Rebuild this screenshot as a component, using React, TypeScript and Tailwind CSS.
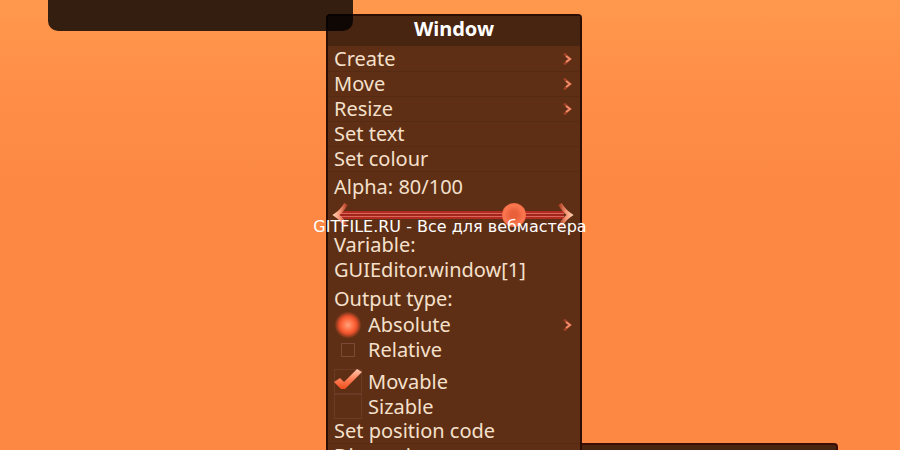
import React from 'react'

const toolItems = [
  { label: 'Create', submenu: true },
  { label: 'Move', submenu: true },
  { label: 'Resize', submenu: true },
  { label: 'Set text', submenu: false },
  { label: 'Set colour', submenu: false },
]

const SubmenuArrow = () => (
  <svg className="w-[9px] h-3" viewBox="0 0 9 12" fill="none" aria-hidden="true">
    <path d="M1 0.5L7 6L1 11.5" stroke="#9c4226" strokeWidth="2.6" />
    <path d="M3 3L7 6L3 9" stroke="#f08a68" strokeWidth="2" />
  </svg>
)

const SliderArrow = ({ className }: { className: string }) => (
  <svg className={className} viewBox="0 0 16 24" fill="none" aria-hidden="true">
    <path d="M14 1Q10 8 4 12Q10 16 14 23" stroke="url(#arrowFade)" strokeWidth="4" />
    <defs>
      <linearGradient id="arrowFade" x1="1" y1="0" x2="15" y2="0" gradientUnits="userSpaceOnUse">
        <stop stopColor="#ffd0b4" />
        <stop offset="0.5" stopColor="#f89474" />
        <stop offset="1" stopColor="#a83a1e" />
      </linearGradient>
    </defs>
  </svg>
)

const MenuItem = ({ label, submenu = false }: { label: string; submenu?: boolean }) => (
  <button
    type="button"
    className="flex h-[25px] w-full items-center justify-between border-b border-[#552b13] pl-1.5 pr-2 text-left"
  >
    {label}
    {submenu && <SubmenuArrow />}
  </button>
)

const App = () => {
  return (
    <main className="relative h-screen overflow-hidden bg-linear-to-b from-[#ff984c] from-0% via-[#ff8e48] via-20% to-[#fc8844] to-40% font-['Noto_Sans','Open_Sans',sans-serif] text-xl leading-6 text-[#f5e0cc]">
      {/* Context menu */}
      <section
        aria-label="Window menu"
        className="absolute left-[326px] top-3.5 w-64 rounded-t-sm border-2 border-[#2c0d03] bg-[#5e2f15]"
      >
        <h1 className="flex h-[30px] items-center justify-center bg-[#482511] pb-1 font-bold text-white">
          Window
        </h1>

        <div className="pt-px">
          {toolItems.map((item) => (
            <MenuItem key={item.label} label={item.label} submenu={item.submenu} />
          ))}
        </div>

        <div className="mt-0.5">
          <label htmlFor="alpha" className="flex h-[25px] items-center px-1.5">
            Alpha: 80/100
          </label>
          <div className="relative flex h-8 items-center pl-1.5 pr-3">
            <input
              id="alpha"
              type="range"
              min="0"
              max="100"
              defaultValue="80"
              className="h-6 w-full appearance-none bg-[linear-gradient(#b32a20_0_2px,#d9675a_2px_3px,#a3241b_3px_5px,#d9675a_5px_6px,#b32a20_6px_8px)] bg-size-[calc(100%-8px)_8px] bg-center bg-no-repeat [&::-webkit-slider-thumb]:size-6 [&::-webkit-slider-thumb]:appearance-none [&::-webkit-slider-thumb]:rounded-full [&::-webkit-slider-thumb]:bg-[radial-gradient(circle,#e85f38_20%,#fc7850_60%,#d8482a_90%)]"
            />
            <SliderArrow className="absolute left-1 top-1 h-6 w-4" />
            <SliderArrow className="absolute right-1.5 top-1 h-6 w-4 rotate-180" />
          </div>
        </div>

        <dl className="mt-0.5 px-1.5">
          <dt className="h-[25px]">Variable:</dt>
          <dd className="h-[25px]">GUIEditor.window[1]</dd>
        </dl>

        <fieldset className="mt-1">
          <legend className="h-[25px] px-1.5">Output type:</legend>
          <div className="flex h-[25px] items-center justify-between pl-1.5 pr-2">
            <label className="flex items-center gap-1.5">
              <input
                type="radio"
                name="output"
                defaultChecked
                className="size-7 appearance-none bg-[radial-gradient(circle,#ffa27c_0%,#ff6a3e_30%,#e8512b_45%,transparent_68%)]"
              />
              Absolute
            </label>
            <SubmenuArrow />
          </div>
          <label className="flex h-[25px] items-center gap-1.5 px-1.5">
            <span className="flex w-7 justify-center">
              <input
                type="radio"
                name="output"
                className="size-3.5 appearance-none border border-[#7b4a36]"
              />
            </span>
            Relative
          </label>
        </fieldset>

        <div className="mt-[7px]">
          <label className="relative flex h-[25px] items-center gap-1.5 px-1.5">
            <input
              type="checkbox"
              defaultChecked
              className="h-[25px] w-7 appearance-none border border-[#6b3b26]"
            />
            <svg className="absolute left-1.5 top-0 h-6 w-7" viewBox="0 0 28 24" aria-hidden="true">
              <path d="M0 13L6 9L10 13L23 0L28 3L11 20L7 20Z" fill="url(#checkFill)" />
              <defs>
                <linearGradient id="checkFill" x1="0" y1="0" x2="0" y2="1">
                  <stop stopColor="#ffc9ae" />
                  <stop offset="0.5" stopColor="#ff8058" />
                  <stop offset="1" stopColor="#f04e1c" />
                </linearGradient>
              </defs>
            </svg>
            Movable
          </label>
          <label className="flex h-[25px] items-center gap-1.5 px-1.5">
            <input
              type="checkbox"
              className="h-[25px] w-7 appearance-none border border-[#6b3b26]"
            />
            Sizable
          </label>
          <MenuItem label="Set position code" />
          <MenuItem label="Dimensions" />
        </div>
      </section>

      {/* Translucent window that hangs over the top edge */}
      <div className="absolute left-12 top-0 h-[31px] w-[305px] rounded-b-[10px] bg-black/80" />

      {/* Window behind the lower right corner of the menu */}
      <div className="absolute left-[582px] top-[443px] h-20 w-64 rounded-tr-sm border-2 border-l-0 border-[#3c0d04] bg-[#482511]" />

      <div className="pointer-events-none absolute inset-0 flex items-center justify-center pt-1 font-['DejaVu_Sans',sans-serif] text-base text-white">
        GITFILE.RU - Все для вебмастера
      </div>
    </main>
  )
}

export default App
